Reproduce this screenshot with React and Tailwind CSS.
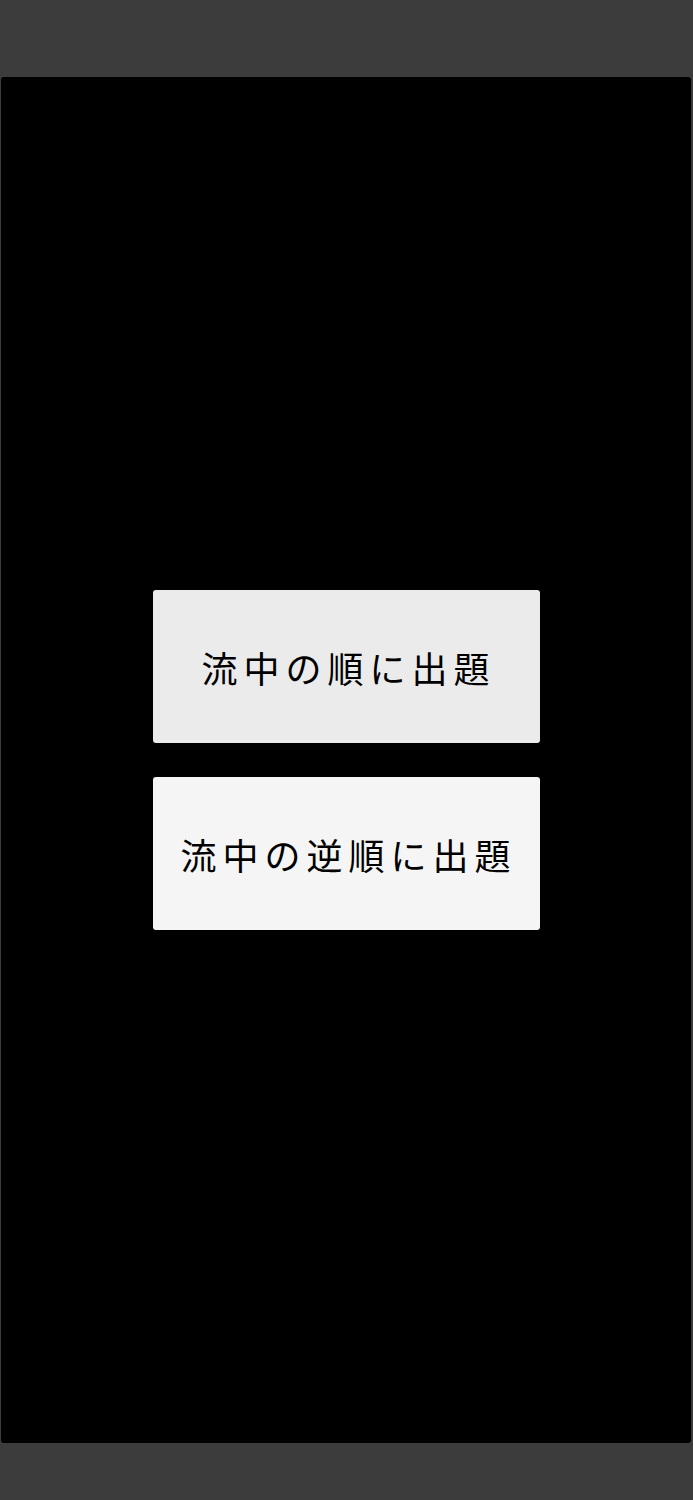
import React from "react";

const choices = [
  { id: "forward", label: "流中の順に出題", bg: "bg-[#ebebeb]" },
  { id: "reverse", label: "流中の逆順に出題", bg: "bg-[#f5f5f5]" },
];

export default function App() {
  return (
    <div className="min-h-[1500px] bg-[#3c3c3c] pt-[77px] pl-[1px] pr-[2px]">
      {/* Quiz order panel */}
      <div className="h-[1366px] bg-black rounded-[3px] flex flex-col items-center justify-center gap-[34px]">
        {choices.map((c) => (
          <button
            key={c.id}
            className={`w-[387px] h-[153px] ${c.bg} rounded-[3px] flex items-center justify-center text-black text-[36px] tracking-[6px] pl-[5px] pt-[1px] font-['Noto_Sans_CJK_JP','Noto_Sans',sans-serif]`}
          >
            {c.label}
          </button>
        ))}
      </div>
    </div>
  );
}
